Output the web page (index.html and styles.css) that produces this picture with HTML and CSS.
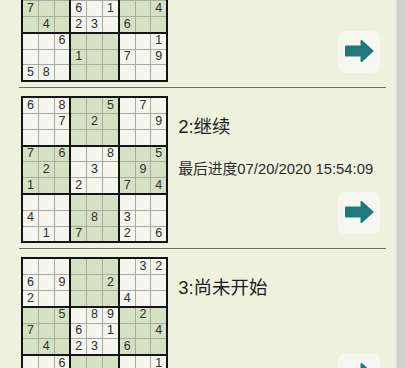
FILE: index.html
```html
<!DOCTYPE html>
<html lang="zh">
<head>
<meta charset="utf-8">
<link rel="stylesheet" href="styles.css">
</head>
<body>
<div class="page">
  <div class="list">
    <div class="item">
      <div class="board">
        <div class="box"><span></span><span></span><span></span><span>6</span><span></span><span>9</span><span>2</span><span></span><span></span></div>
        <div class="box g"><span></span><span></span><span></span><span></span><span></span><span>2</span><span></span><span></span><span></span></div>
        <div class="box"><span></span><span>3</span><span>2</span><span></span><span></span><span></span><span>4</span><span></span><span></span></div>
        <div class="box g"><span></span><span></span><span>5</span><span>7</span><span></span><span></span><span></span><span>4</span><span></span></div>
        <div class="box"><span></span><span>8</span><span>9</span><span>6</span><span></span><span>1</span><span>2</span><span>3</span><span></span></div>
        <div class="box g"><span></span><span>2</span><span></span><span></span><span></span><span>4</span><span>6</span><span></span><span></span></div>
        <div class="box"><span></span><span></span><span>6</span><span></span><span></span><span></span><span>5</span><span>8</span><span></span></div>
        <div class="box g"><span></span><span></span><span></span><span>1</span><span></span><span></span><span></span><span></span><span></span></div>
        <div class="box"><span></span><span></span><span>1</span><span>7</span><span></span><span>9</span><span></span><span></span><span></span></div>
      </div>
      <div class="info">
        <div class="title">1:尚未开始</div>
        <button class="go" type="button" aria-label="go">
          <svg viewBox="0 0 42 42" width="42" height="42"><path d="M8 15.5H23.5V10L34.5 20L23.5 30V24.5H8Z"/></svg>
        </button>
      </div>
    </div>

    <div class="item">
      <div class="board">
        <div class="box"><span>6</span><span></span><span>8</span><span></span><span></span><span>7</span><span></span><span></span><span></span></div>
        <div class="box g"><span></span><span></span><span>5</span><span></span><span>2</span><span></span><span></span><span></span><span></span></div>
        <div class="box"><span></span><span>7</span><span></span><span></span><span></span><span>9</span><span></span><span></span><span></span></div>
        <div class="box g"><span>7</span><span></span><span>6</span><span></span><span>2</span><span></span><span>1</span><span></span><span></span></div>
        <div class="box"><span></span><span></span><span>8</span><span></span><span>3</span><span></span><span>2</span><span></span><span></span></div>
        <div class="box g"><span></span><span></span><span>5</span><span></span><span>9</span><span></span><span>7</span><span></span><span>4</span></div>
        <div class="box"><span></span><span></span><span></span><span>4</span><span></span><span></span><span></span><span>1</span><span></span></div>
        <div class="box g"><span></span><span></span><span></span><span></span><span>8</span><span></span><span>7</span><span></span><span></span></div>
        <div class="box"><span></span><span></span><span></span><span>3</span><span></span><span></span><span>2</span><span></span><span>6</span></div>
      </div>
      <div class="info">
        <div class="title">2:继续</div>
        <div class="date">最后进度07/20/2020 15:54:09</div>
        <button class="go" type="button" aria-label="go">
          <svg viewBox="0 0 42 42" width="42" height="42"><path d="M8 15.5H23.5V10L34.5 20L23.5 30V24.5H8Z"/></svg>
        </button>
      </div>
    </div>

    <div class="item">
      <div class="board">
        <div class="box"><span></span><span></span><span></span><span>6</span><span></span><span>9</span><span>2</span><span></span><span></span></div>
        <div class="box g"><span></span><span></span><span></span><span></span><span></span><span>2</span><span></span><span></span><span></span></div>
        <div class="box"><span></span><span>3</span><span>2</span><span></span><span></span><span></span><span>4</span><span></span><span></span></div>
        <div class="box g"><span></span><span></span><span>5</span><span>7</span><span></span><span></span><span></span><span>4</span><span></span></div>
        <div class="box"><span></span><span>8</span><span>9</span><span>6</span><span></span><span>1</span><span>2</span><span>3</span><span></span></div>
        <div class="box g"><span></span><span>2</span><span></span><span></span><span></span><span>4</span><span>6</span><span></span><span></span></div>
        <div class="box"><span></span><span></span><span>6</span><span></span><span></span><span></span><span>5</span><span>8</span><span></span></div>
        <div class="box g"><span></span><span></span><span></span><span>1</span><span></span><span></span><span></span><span></span><span></span></div>
        <div class="box"><span></span><span></span><span>1</span><span>7</span><span></span><span>9</span><span></span><span></span><span></span></div>
      </div>
      <div class="info">
        <div class="title">3:尚未开始</div>
        <button class="go" type="button" aria-label="go">
          <svg viewBox="0 0 42 42" width="42" height="42"><path d="M8 15.5H23.5V10L34.5 20L23.5 30V24.5H8Z"/></svg>
        </button>
      </div>
    </div>
  </div>
  <div class="strip"></div>
</div>
</body>
</html>
```

FILE: styles.css
```css
html, body {
  margin: 0;
  padding: 0;
  background: #eff1df;
  overflow: hidden;
}

.page {
  display: flex;
  width: 405px;
  height: 368px;
  overflow: hidden;
  font-family: "Liberation Sans", "Noto Sans CJK SC", sans-serif;
  color: #222;
}

.list {
  flex: 1;
  padding: 0 9px 0 19px;
  margin-top: -73px;
}

.item {
  display: flex;
  padding: 8px 0 5px 2px;
  border-bottom: 1px solid #6e6f68;
}

.board {
  display: grid;
  grid-template-columns: repeat(3, auto);
  gap: 2px;
  padding: 2px;
  background: #141414;
  align-self: flex-start;
}

.box {
  display: grid;
  grid-template-columns: repeat(3, 14.8px);
  grid-auto-rows: 14.8px;
  gap: 1px;
  background: #a6ab9b;
}

.box span {
  display: flex;
  align-items: center;
  justify-content: center;
  background: #f4f5ec;
  font-family: "Liberation Sans", Arial, sans-serif;
  font-size: 12.5px;
  line-height: 1;
  color: #2e2e2e;
  padding-bottom: 1px;
  box-sizing: border-box;
}

.box.g span {
  background: #d5e1c3;
}

.info {
  flex: 1;
  display: flex;
  flex-direction: column;
  margin-left: 10px;
  padding-top: 19px;
  padding-bottom: 9px;
}

.title {
  font-size: 18.5px;
  line-height: 24px;
  color: #1e1e1e;
}

.date {
  margin-top: 20px;
  font-size: 14.8px;
  line-height: 21px;
  color: #2a2a2a;
  white-space: nowrap;
}

.go {
  margin-top: auto;
  align-self: flex-end;
  margin-right: 6px;
  width: 42px;
  height: 42px;
  padding: 0;
  border: none;
  border-radius: 7px;
  background: #f6f7f0;
  display: block;
}

.go svg {
  display: block;
}

.go path {
  fill: #1f7a7b;
  stroke: #1f7a7b;
  stroke-width: 2;
  stroke-linejoin: round;
}

.strip {
  width: 8px;
  flex: none;
  background: #d0d0cb;
  border-left: 2px solid #e6e7df;
}
```
